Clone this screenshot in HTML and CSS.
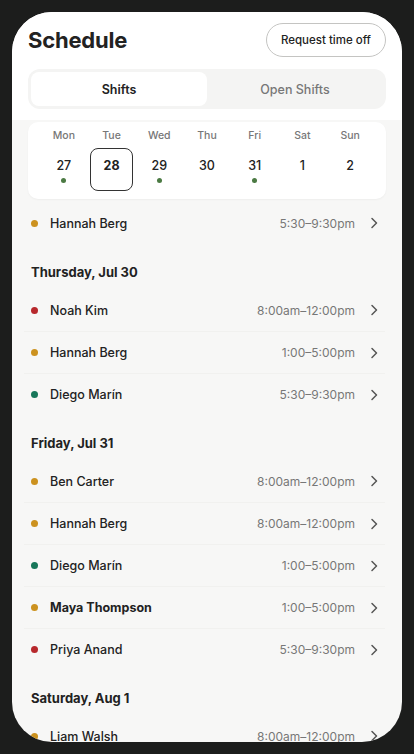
FILE: index.html
```html
<!DOCTYPE html>
<html lang="en">
<head>
    <meta charset="UTF-8">
    <meta name="viewport" content="width=device-width, initial-scale=1.0">
    <title>Schedule</title>
    <link rel="stylesheet" href="styles.css">
</head>
<body>
    <div class="phone">
        <header class="top">
            <div class="title-row">
                <h1>Schedule</h1>
                <button class="pill-button" type="button">Request time off</button>
            </div>
            <div class="segmented">
                <button class="segment active" type="button">Shifts</button>
                <button class="segment" type="button">Open Shifts</button>
            </div>
        </header>

        <main class="content">
            <div class="week-card">
                <div class="day"><span class="day-name">Mon</span><span class="date">27<i class="mark"></i></span></div>
                <div class="day"><span class="day-name">Tue</span><span class="date selected">28</span></div>
                <div class="day"><span class="day-name">Wed</span><span class="date">29<i class="mark"></i></span></div>
                <div class="day"><span class="day-name">Thu</span><span class="date">30</span></div>
                <div class="day"><span class="day-name">Fri</span><span class="date">31<i class="mark"></i></span></div>
                <div class="day"><span class="day-name">Sat</span><span class="date">1</span></div>
                <div class="day"><span class="day-name">Sun</span><span class="date">2</span></div>
            </div>

            <div class="shift-list">
                <section class="group">
                    <div class="row"><span class="dot amber"></span><span class="name">Hannah Berg</span><span class="time">5:30–9:30pm</span><svg class="chev" viewBox="0 0 8 12"><path d="M2 1.5 6.5 6 2 10.5"/></svg></div>
                </section>

                <section class="group">
                    <h2>Thursday, Jul 30</h2>
                    <div class="row"><span class="dot red"></span><span class="name">Noah Kim</span><span class="time">8:00am–12:00pm</span><svg class="chev" viewBox="0 0 8 12"><path d="M2 1.5 6.5 6 2 10.5"/></svg></div>
                    <div class="row"><span class="dot amber"></span><span class="name">Hannah Berg</span><span class="time">1:00–5:00pm</span><svg class="chev" viewBox="0 0 8 12"><path d="M2 1.5 6.5 6 2 10.5"/></svg></div>
                    <div class="row"><span class="dot green"></span><span class="name">Diego Marín</span><span class="time">5:30–9:30pm</span><svg class="chev" viewBox="0 0 8 12"><path d="M2 1.5 6.5 6 2 10.5"/></svg></div>
                </section>

                <section class="group">
                    <h2>Friday, Jul 31</h2>
                    <div class="row"><span class="dot amber"></span><span class="name">Ben Carter</span><span class="time">8:00am–12:00pm</span><svg class="chev" viewBox="0 0 8 12"><path d="M2 1.5 6.5 6 2 10.5"/></svg></div>
                    <div class="row"><span class="dot amber"></span><span class="name">Hannah Berg</span><span class="time">8:00am–12:00pm</span><svg class="chev" viewBox="0 0 8 12"><path d="M2 1.5 6.5 6 2 10.5"/></svg></div>
                    <div class="row"><span class="dot green"></span><span class="name">Diego Marín</span><span class="time">1:00–5:00pm</span><svg class="chev" viewBox="0 0 8 12"><path d="M2 1.5 6.5 6 2 10.5"/></svg></div>
                    <div class="row"><span class="dot amber"></span><span class="name strong">Maya Thompson</span><span class="time">1:00–5:00pm</span><svg class="chev" viewBox="0 0 8 12"><path d="M2 1.5 6.5 6 2 10.5"/></svg></div>
                    <div class="row"><span class="dot red"></span><span class="name">Priya Anand</span><span class="time">5:30–9:30pm</span><svg class="chev" viewBox="0 0 8 12"><path d="M2 1.5 6.5 6 2 10.5"/></svg></div>
                </section>

                <section class="group">
                    <h2>Saturday, Aug 1</h2>
                    <div class="row"><span class="dot amber"></span><span class="name">Liam Walsh</span><span class="time">8:00am–12:00pm</span><svg class="chev" viewBox="0 0 8 12"><path d="M2 1.5 6.5 6 2 10.5"/></svg></div>
                </section>
            </div>
        </main>
    </div>
</body>
</html>
```

FILE: styles.css
```css
body {
    margin: 0;
    padding: 12px;
    background-color: #1c1d1c;
    font-family: 'Inter', 'Liberation Sans', sans-serif;
    color: #222;
}

.phone {
    width: 390px;
    height: 730px;
    border-radius: 40px;
    overflow: hidden;
    background-color: #f7f7f6;
    display: flex;
    flex-direction: column;
}

.top {
    background-color: #fff;
    padding: 11px 16px 11px;
}

.title-row {
    display: flex;
    justify-content: space-between;
    align-items: center;
}

.title-row h1 {
    margin: 0;
    font-size: 22px;
    font-weight: 700;
    letter-spacing: -0.2px;
}

.pill-button {
    height: 34px;
    padding: 0 14px;
    border: 1px solid #c4c4c2;
    border-radius: 17px;
    background-color: #fff;
    font-family: inherit;
    font-size: 11.5px;
    font-weight: 500;
    color: #222;
}

.segmented {
    margin-top: 12px;
    padding: 3px;
    display: grid;
    grid-template-columns: 1fr 1fr;
    background-color: #f4f4f3;
    border-radius: 12px;
}

.segment {
    height: 34px;
    border: none;
    border-radius: 8px;
    background: none;
    font-family: inherit;
    font-size: 12.5px;
    font-weight: 500;
    color: #777;
}

.segment.active {
    background-color: #fff;
    color: #222;
    font-weight: 600;
}

.content {
    flex: 1;
    padding-top: 2px;
}

.week-card {
    margin: 0 16px 3px;
    padding: 6px 12px 8px;
    display: grid;
    grid-template-columns: repeat(7, 1fr);
    background-color: #fff;
    border-radius: 10px;
    box-shadow: 0 1px 2px rgba(0, 0, 0, 0.04);
}

.day {
    display: flex;
    flex-direction: column;
    align-items: center;
    gap: 4px;
}

.day-name {
    line-height: 16px;
    font-size: 10.5px;
    font-weight: 500;
    color: #777;
}

.date {
    box-sizing: border-box;
    width: 43px;
    height: 43px;
    padding-top: 9px;
    display: flex;
    flex-direction: column;
    align-items: center;
    line-height: 18px;
    font-size: 12.5px;
    font-weight: 500;
    color: #222;
}

.date.selected {
    border: 1.5px solid #333;
    border-radius: 8px;
    padding-top: 7.5px;
    font-weight: 700;
}

.mark {
    margin-top: 3px;
    width: 5px;
    height: 5px;
    border-radius: 50%;
    background-color: #4b7a43;
}

.shift-list {
    margin: 0 17px 0 12px;
}

.group h2 {
    margin: 0;
    padding: 18px 7px 7px;
    line-height: 20px;
    font-size: 13px;
    font-weight: 700;
    color: #222;
}

.row {
    box-sizing: border-box;
    height: 42px;
    padding: 0 7px;
    display: flex;
    align-items: center;
}

.row + .row {
    border-top: 1px solid #f1f1ef;
}

.dot {
    width: 7px;
    height: 7px;
    border-radius: 50%;
    margin-right: 12px;
}

.dot.amber { background-color: #cc921f; }
.dot.red { background-color: #b7282c; }
.dot.green { background-color: #17775a; }

.name {
    flex: 1;
    font-size: 12.5px;
    font-weight: 500;
    color: #222;
}

.name.strong {
    font-weight: 700;
}

.time {
    font-size: 12px;
    color: #777;
}

.chev {
    width: 8px;
    height: 12px;
    margin-left: 15px;
    fill: none;
    stroke: #555;
    stroke-width: 1.5;
    stroke-linecap: round;
    stroke-linejoin: round;
}
```
